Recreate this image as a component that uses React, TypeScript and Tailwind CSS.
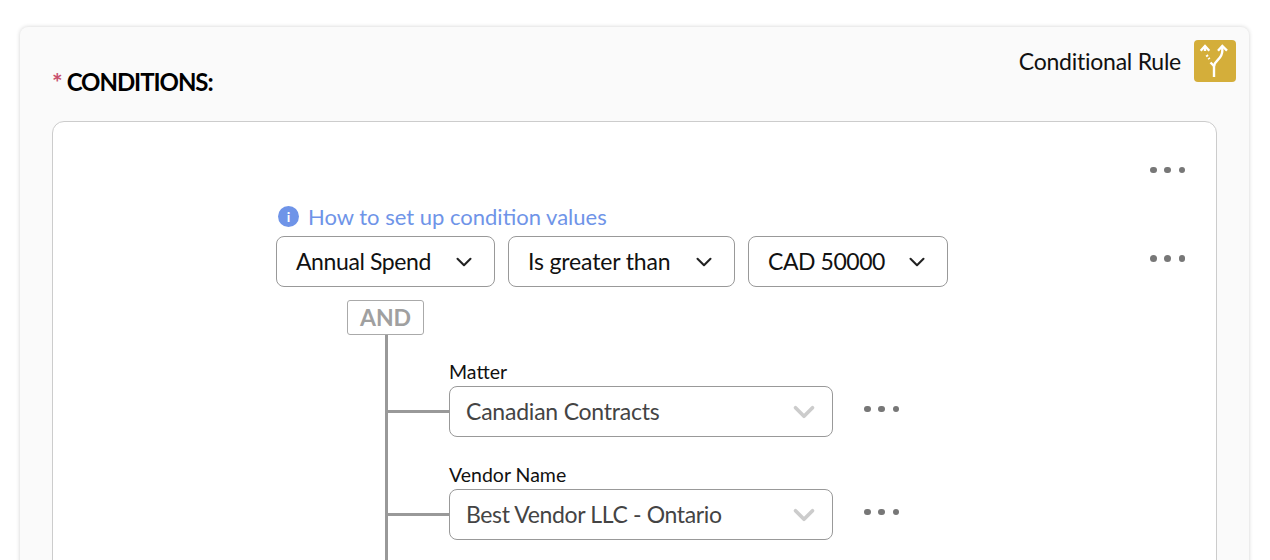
import { ChevronDown } from 'lucide-react';

function Dots({ className = '' }: { className?: string }) {
  return (
    <div className={`flex items-center gap-[7.75px] ${className}`}>
      <span className="w-[6.5px] h-[6.5px] rounded-full bg-[#777777]" />
      <span className="w-[6.5px] h-[6.5px] rounded-full bg-[#777777]" />
      <span className="w-[6.5px] h-[6.5px] rounded-full bg-[#777777]" />
    </div>
  );
}

function RuleIcon() {
  return (
    <div className="w-[42px] h-[42px] rounded-[4px] bg-[#d4ae3a] flex items-center justify-center">
      <svg width="42" height="42" viewBox="0 0 42 42" fill="none" stroke="#ffffff" strokeWidth="2.4">
        <path d="M20 37V25" />
        <path d="M20 26C21 20 28.3 19 28.3 11V6" />
        <path d="M20 26L16.5 22.5" />
        <path d="M24 10.7L28.3 6L33 10.7" />
        <path d="M6.7 10.7L11 6L15.3 10.7" />
        <path d="M11 6V11" />
        <path d="M12.6 15L13.6 16.6" />
        <path d="M14.6 18L15.4 19.2" />
      </svg>
    </div>
  );
}

function FilterSelect({ label, width, tracking }: { label: string; width: string; tracking: string }) {
  return (
    <div className={`${width} h-[51px] shrink-0 flex items-center justify-between pl-[19px] pr-[17px] bg-white border border-[#999999] rounded-[8px]`}>
      <span className={`text-[23px] text-[#111111] ${tracking}`}>{label}</span>
      <ChevronDown size={26} strokeWidth={1.9} className="text-[#222222]" />
    </div>
  );
}

function TreeRow({ label, value, tracking }: { label: string; value: string; tracking: string }) {
  return (
    <div className="flex items-end">
      <div className="w-[61px] h-[51px] flex items-center shrink-0">
        <div className="w-full h-[3px] bg-[#999999]" />
      </div>
      <div className="w-[384px] shrink-0">
        <div className="text-[19.5px] leading-[24px] text-[#111111] mb-[2px]">{label}</div>
        <div className="h-[51px] flex items-center justify-between pl-[16px] pr-[11px] bg-white border border-[#999999] rounded-[8px]">
          <span className={`text-[23px] text-[#444444] ${tracking}`}>{value}</span>
          <ChevronDown size={34} strokeWidth={2.6} className="text-[#cccccc]" />
        </div>
      </div>
      <div className="h-[51px] flex items-center ml-[31px] pb-[5px]">
        <Dots />
      </div>
    </div>
  );
}

export default function App() {
  return (
    <div className="h-[560px] overflow-hidden bg-white pt-[27px] pl-[20px] font-['Lato',sans-serif]">
      <div className="w-[1229px] h-[600px] bg-[#fafafa] rounded-[8px] shadow-[0_0_4px_rgba(0,0,0,0.18)] pl-[32px] pr-[13px] pt-[13px]">
        {/* Header */}
        <div className="flex justify-between h-[81px]">
          <div className="pt-[27px] flex items-start">
            <span className="text-[25px] leading-[30px] font-bold text-[#c8506e] mr-[4px]">*</span>
            <span className="text-[24px] leading-[30px] font-bold text-black tracking-[-1.05px]">CONDITIONS:</span>
          </div>
          <div className="flex items-start gap-[13px]">
            <span className="text-[23px] leading-[42px] text-[#111111] tracking-[-0.25px]">Conditional Rule</span>
            <RuleIcon />
          </div>
        </div>

        {/* Conditions box */}
        <div className="w-[1165px] h-[500px] bg-white border border-[#cccccc] rounded-[12px] pt-[40px] pl-[223px] pr-[31px]">
          <div className="flex justify-end h-[16px]">
            <Dots />
          </div>

          <div className="flex items-center gap-[9px] h-[26px] mt-[25px] ml-[2px]">
            <span className="w-[21px] h-[21px] rounded-full bg-[#6f94e8] text-white text-[14px] font-bold flex items-center justify-center">i</span>
            <span className="text-[22px] text-[#6f94e8]">How to set up condition values</span>
          </div>

          <div className="flex items-center justify-between mt-[7px]">
            <div className="flex gap-[13px]">
              <FilterSelect label="Annual Spend" width="w-[219px]" tracking="tracking-[-0.4px]" />
              <FilterSelect label="Is greater than" width="w-[227px]" tracking="tracking-[-0.15px]" />
              <FilterSelect label="CAD 50000" width="w-[200px]" tracking="tracking-[-0.45px]" />
            </div>
            <Dots className="pb-[6px]" />
          </div>

          {/* Tree */}
          <div className="ml-[71px] mt-[13px] w-[77px] h-[35px] flex items-center justify-center bg-white border border-[#aaaaaa] rounded-[3px]">
            <span className="text-[23px] font-bold text-[#a0a0a0]">AND</span>
          </div>
          <div className="ml-[109px] border-l-[3px] border-[#999999] flex flex-col gap-[26px] pt-[25px] h-[300px]">
            <TreeRow label="Matter" value="Canadian Contracts" tracking="tracking-[-0.22px]" />
            <TreeRow label="Vendor Name" value="Best Vendor LLC - Ontario" tracking="tracking-[-0.36px]" />
          </div>
        </div>
      </div>
    </div>
  );
}
